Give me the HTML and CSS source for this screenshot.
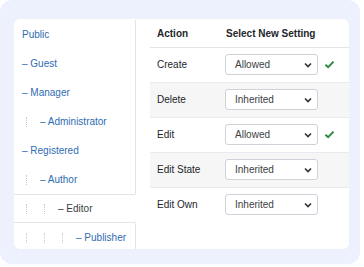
FILE: index.html
```html
<!DOCTYPE html>
<html lang="en">

<head>
    <meta charset="UTF-8">
    <meta name="viewport" content="width=device-width, initial-scale=1.0">
    <link rel="stylesheet" href="styles.css">
    <title>Permissions</title>
</head>

<body>
    <div class="frame">
        <div class="card">
            <ul class="groups">
                <li class="group"><a>Public</a></li>
                <li class="group"><a>&ndash; Guest</a></li>
                <li class="group"><a>&ndash; Manager</a></li>
                <li class="group"><span class="guide"></span><a>&ndash; Administrator</a></li>
                <li class="group"><a>&ndash; Registered</a></li>
                <li class="group"><span class="guide"></span><a>&ndash; Author</a></li>
                <li class="group active"><span class="guide"></span><span class="guide"></span><a>&ndash; Editor</a></li>
                <li class="group"><span class="guide"></span><span class="guide"></span><span class="guide"></span><a>&ndash; Publisher</a></li>
            </ul>

            <table class="rules">
                <thead>
                    <tr>
                        <th class="action">Action</th>
                        <th>Select New Setting</th>
                    </tr>
                </thead>
                <tbody>
                    <tr>
                        <td class="action">Create</td>
                        <td>
                            <div class="setting">
                                <div class="select">Allowed <svg class="chev" viewBox="0 0 8 6"><path d="M1 1.5 L4 4.5 L7 1.5" /></svg></div>
                                <svg class="tick" viewBox="0 0 12 10"><path d="M1.5 5.2 L4.5 8 L10.5 1.8" /></svg>
                            </div>
                        </td>
                    </tr>
                    <tr class="odd">
                        <td class="action">Delete</td>
                        <td>
                            <div class="setting">
                                <div class="select">Inherited <svg class="chev" viewBox="0 0 8 6"><path d="M1 1.5 L4 4.5 L7 1.5" /></svg></div>
                            </div>
                        </td>
                    </tr>
                    <tr>
                        <td class="action">Edit</td>
                        <td>
                            <div class="setting">
                                <div class="select">Allowed <svg class="chev" viewBox="0 0 8 6"><path d="M1 1.5 L4 4.5 L7 1.5" /></svg></div>
                                <svg class="tick" viewBox="0 0 12 10"><path d="M1.5 5.2 L4.5 8 L10.5 1.8" /></svg>
                            </div>
                        </td>
                    </tr>
                    <tr class="odd">
                        <td class="action">Edit State</td>
                        <td>
                            <div class="setting">
                                <div class="select">Inherited <svg class="chev" viewBox="0 0 8 6"><path d="M1 1.5 L4 4.5 L7 1.5" /></svg></div>
                            </div>
                        </td>
                    </tr>
                    <tr>
                        <td class="action">Edit Own</td>
                        <td>
                            <div class="setting">
                                <div class="select">Inherited <svg class="chev" viewBox="0 0 8 6"><path d="M1 1.5 L4 4.5 L7 1.5" /></svg></div>
                            </div>
                        </td>
                    </tr>
                </tbody>
            </table>
        </div>
    </div>
</body>

</html>
```

FILE: styles.css
```css
* {
    margin: 0;
    padding: 0;
    box-sizing: border-box;
}

body {
    background: #fff;
    font-family: "Liberation Sans", Arial, sans-serif;
    font-size: 10px;
    color: #22262a;
}

.frame {
    width: 360px;
    height: 264px;
    background: #edf1fd;
    border-radius: 12px;
    padding: 19px 11px 15px 14px;
}

.card {
    display: flex;
    width: 335px;
    height: 230px;
    background: #fff;
    border-radius: 6px;
    overflow: hidden;
}

/* group tree */
.groups {
    list-style: none;
    width: 122px;
    padding-top: 1px;
}

.group {
    display: flex;
    align-items: center;
    height: 29px;
    padding-left: 8px;
    border-right: 1px solid #e1e4e8;
}

.group a {
    color: #2f6cb3;
}

.group.active {
    border-right: none;
    border-top: 1px solid #e1e4e8;
    border-bottom: 1px solid #e1e4e8;
    border-radius: 0 2px 2px 0;
    background: #fff;
}

.group.active a {
    color: #3a3d40;
}

.guide {
    width: 18px;
    height: 10px;
}

.guide::before {
    content: "";
    display: block;
    margin-left: 4px;
    height: 10px;
    border-left: 1px dotted #c8ccd0;
}

/* rules table */
.rules {
    width: 199px;
    margin-left: 14px;
    border-collapse: collapse;
    align-self: flex-start;
}

.rules th {
    height: 28px;
    padding: 2px 0 0 1px;
    text-align: left;
    font-weight: bold;
    border-bottom: 1px solid #e1e4e8;
}

.rules td {
    height: 35px;
    border-bottom: 1px solid #e8eaed;
    padding: 0;
}

.rules tbody tr:last-child td {
    border-bottom: none;
}

.rules .action {
    width: 75px;
    padding-left: 7px;
}

.rules tr.odd td {
    background: #f6f6f6;
}

.setting {
    display: flex;
    align-items: center;
    gap: 6px;
}

.select {
    display: flex;
    align-items: center;
    justify-content: space-between;
    width: 93px;
    height: 21px;
    padding: 0 5px 0 9px;
    background: #fff;
    border: 1px solid #ced3d9;
    border-radius: 3px;
    color: #3c4043;
}

.chev {
    width: 8px;
    height: 6px;
    fill: none;
    stroke: #33373b;
    stroke-width: 1.7;
}

.tick {
    width: 11px;
    height: 9px;
    fill: none;
    stroke: #2b8a3e;
    stroke-width: 2.2;
}
```
